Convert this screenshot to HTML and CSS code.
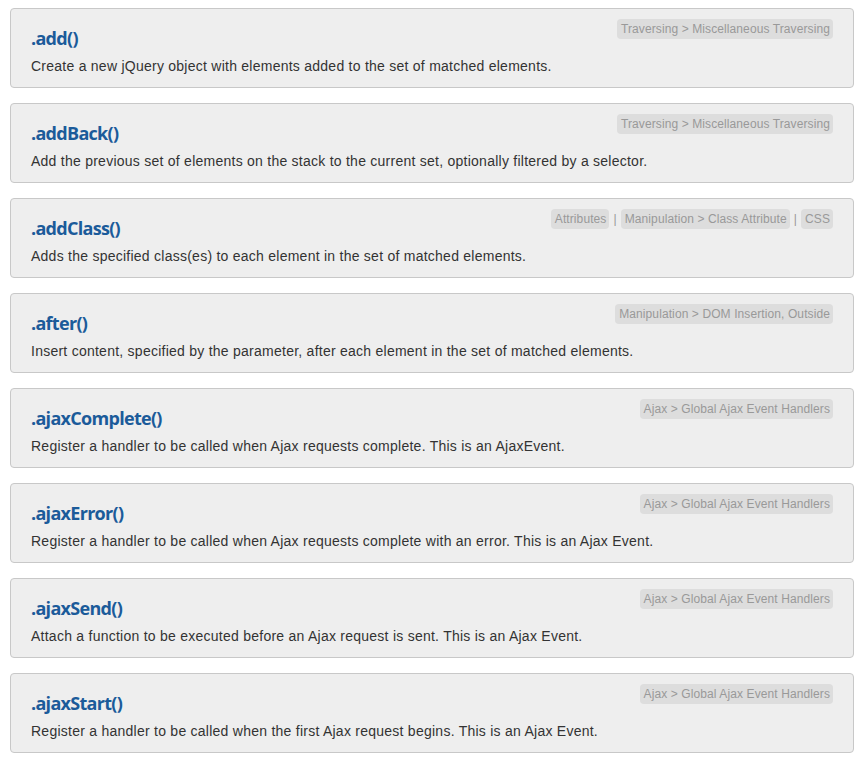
FILE: index.html
```html
<!DOCTYPE html>
<html>
<head>
<meta charset="utf-8">
<link rel="stylesheet" href="styles.css">
</head>
<body>
<div class="list">
  <article class="entry">
    <div class="entry-head">
      <h2 class="entry-title">.add()</h2>
      <div class="cats"><span class="cat">Traversing &gt; Miscellaneous Traversing</span></div>
    </div>
    <p class="entry-desc">Create a new jQuery object with elements added to the set of matched elements.</p>
  </article>
  <article class="entry">
    <div class="entry-head">
      <h2 class="entry-title">.addBack()</h2>
      <div class="cats"><span class="cat">Traversing &gt; Miscellaneous Traversing</span></div>
    </div>
    <p class="entry-desc">Add the previous set of elements on the stack to the current set, optionally filtered by a selector.</p>
  </article>
  <article class="entry">
    <div class="entry-head">
      <h2 class="entry-title">.addClass()</h2>
      <div class="cats"><span class="cat">Attributes</span><span class="sep">|</span><span class="cat">Manipulation &gt; Class Attribute</span><span class="sep">|</span><span class="cat">CSS</span></div>
    </div>
    <p class="entry-desc">Adds the specified class(es) to each element in the set of matched elements.</p>
  </article>
  <article class="entry">
    <div class="entry-head">
      <h2 class="entry-title">.after()</h2>
      <div class="cats"><span class="cat">Manipulation &gt; DOM Insertion, Outside</span></div>
    </div>
    <p class="entry-desc">Insert content, specified by the parameter, after each element in the set of matched elements.</p>
  </article>
  <article class="entry">
    <div class="entry-head">
      <h2 class="entry-title">.ajaxComplete()</h2>
      <div class="cats"><span class="cat">Ajax &gt; Global Ajax Event Handlers</span></div>
    </div>
    <p class="entry-desc">Register a handler to be called when Ajax requests complete. This is an AjaxEvent.</p>
  </article>
  <article class="entry">
    <div class="entry-head">
      <h2 class="entry-title">.ajaxError()</h2>
      <div class="cats"><span class="cat">Ajax &gt; Global Ajax Event Handlers</span></div>
    </div>
    <p class="entry-desc">Register a handler to be called when Ajax requests complete with an error. This is an Ajax Event.</p>
  </article>
  <article class="entry">
    <div class="entry-head">
      <h2 class="entry-title">.ajaxSend()</h2>
      <div class="cats"><span class="cat">Ajax &gt; Global Ajax Event Handlers</span></div>
    </div>
    <p class="entry-desc">Attach a function to be executed before an Ajax request is sent. This is an Ajax Event.</p>
  </article>
  <article class="entry">
    <div class="entry-head">
      <h2 class="entry-title">.ajaxStart()</h2>
      <div class="cats"><span class="cat">Ajax &gt; Global Ajax Event Handlers</span></div>
    </div>
    <p class="entry-desc">Register a handler to be called when the first Ajax request begins. This is an Ajax Event.</p>
  </article>
</div>
</body>
</html>
```
FILE: styles.css
```css
html, body {
  margin: 0;
  padding: 0;
  background: #fff;
}
body {
  font-family: "Liberation Sans", Arial, sans-serif;
  color: #333;
}
.list {
  display: flex;
  flex-direction: column;
  gap: 15px;
  padding: 8px 12px 0 10px;
}
.entry {
  background: #eee;
  border: 1px solid #c8c8c8;
  border-radius: 4px;
  height: 78px;
  padding: 0 20px;
  box-sizing: content-box;
}
.entry-head {
  display: flex;
  justify-content: space-between;
  align-items: flex-start;
}
.entry-title {
  margin: 0;
  padding-top: 17px;
  font-family: "Open Sans", sans-serif;
  font-weight: 700;
  font-size: 18px;
  line-height: 24px;
  letter-spacing: -0.7px;
  color: #1b5b9a;
}
.cats {
  display: flex;
  align-items: center;
  padding-top: 10px;
  font-size: 12px;
  line-height: 16px;
  letter-spacing: 0.1px;
  color: #999;
}
.cat {
  background: #ddd;
  border-radius: 4px;
  padding: 2px 3px 2px 4px;
}
.sep {
  margin: 0 4px;
  color: #999;
}
.entry-desc {
  margin: 6px 0 0 0;
  font-size: 14px;
  line-height: 20px;
  letter-spacing: 0.25px;
  color: #333;
}
```
